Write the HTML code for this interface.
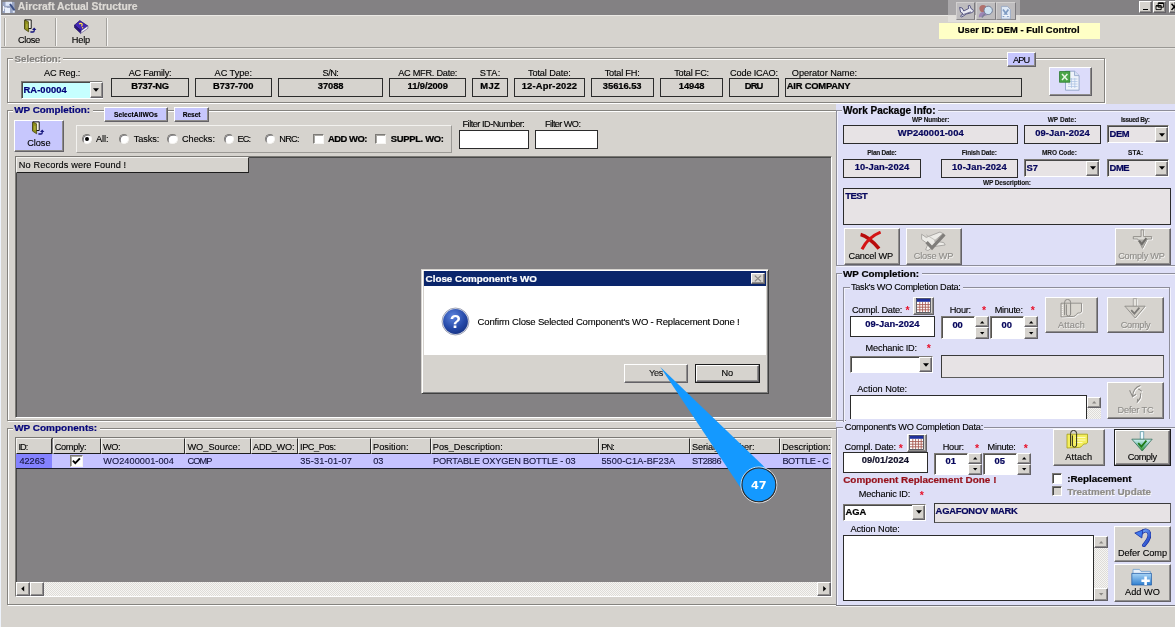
<!DOCTYPE html>
<html lang="en">
<head>
<meta charset="utf-8">
<title>Aircraft Actual Structure</title>
<style>
html,body{margin:0;padding:0;background:#fff;}
body{width:1176px;height:633px;overflow:hidden;font-family:"Liberation Sans",Arial,sans-serif;}
#app{position:relative;width:1176px;height:633px;overflow:hidden;background:#fff;will-change:transform;}
#app div,#app span.t,#app svg{position:absolute;box-sizing:border-box;}
span.t{white-space:pre;display:block;-webkit-text-stroke:0.12px;}
.grp{border:1px solid #85837f;box-shadow:1px 1px 0 #fff, inset 1px 1px 0 #fff;}
.fld{border:1px solid #2b2b2b;}
.btn{border:1px solid;border-color:#fff #646267 #646267 #fff;box-shadow:inset -1px -1px 0 #8f8d8c;}
.sunk{border:1px solid;border-color:#7b7975 #fff #fff #7b7975;box-shadow:inset 1px 1px 0 #484848;}
.hdr{border:1px solid;border-color:#f4f3f0 #2e2d2b #1c1c1c #f4f3f0;background:#d6d3ce;}
.pnl{border:1px solid;border-color:#f3f2ef #9b9995 #9b9995 #f3f2ef;}
.chk{border:1px solid;border-color:#7d7b77 #f6f5f3 #f6f5f3 #7d7b77;box-shadow:inset 1px 1px 0 #a9a7a3;}
.grl{border:1px solid #8d8d99;box-shadow:1px 1px 0 #f3f3fd, inset 1px 1px 0 #f3f3fd;}

</style>
</head>
<body>
<div id="app">
<div style="left:0px;top:0px;width:1176px;height:633px;background:#fff;"></div>
<div style="left:0px;top:0px;width:1px;height:627px;background:#eef3fc;"></div>
<div style="left:1px;top:0px;width:1174px;height:627px;background:#d6d3ce;"></div>
<div style="left:1px;top:0px;width:1174px;height:14.5px;background:#838183;"></div>
<div style="left:1px;top:14.5px;width:1174px;height:1.5px;background:#ebe9e5;"></div>
<svg style="left:2px;top:0.5px" width="14" height="13" viewBox="0 0 14 13"><rect x="0.5" y="1" width="12" height="11" fill="#9aa6c4"/><rect x="3.5" y="0.8" width="6.5" height="4" fill="#dfe8fa"/><rect x="3" y="7" width="5" height="5" fill="#e8effc"/><path d="M8 3L12.5 9.5" stroke="#3a4f86" stroke-width="2"/><rect x="10.8" y="9.6" width="2" height="2" fill="#e4ecfb"/><path d="M1.5 5v5M2 7h3" stroke="#f4f6fb" stroke-width="1"/></svg>
<span class="t" style="left:17.8px;top:1.53px;font-size:10.35px;line-height:10.35px;color:#dedbd6;letter-spacing:-0.000px;font-weight:700;-webkit-text-stroke:0.22px;">Aircraft Actual Structure</span>
<div style="left:947.7px;top:0px;width:72.7px;height:14.8px;background:#aaa8aa;"></div>
<div style="left:947.7px;top:14.8px;width:72.7px;height:7.4px;background:#e1dfdb;"></div>
<div style="left:956.4px;top:1.5px;width:19px;height:18.9px;background:#bebcbe;border:1px solid;border-color:#d2d0d0 #7c7a7e #8b898b #d2d0d0;"></div>
<div style="left:975.6px;top:1.5px;width:20px;height:18.9px;background:#bebcbe;border:1px solid;border-color:#d2d0d0 #7c7a7e #8b898b #d2d0d0;"></div>
<div style="left:995.8px;top:1.5px;width:20px;height:18.9px;background:#bebcbe;border:1px solid;border-color:#d2d0d0 #7c7a7e #8b898b #d2d0d0;"></div>
<svg style="left:956.4px;top:1.5px" width="60" height="19" viewBox="0 0 60 19"><path d="M3.6 5.4l2.6 0.6l1.6 3l5-2.6l-0.6-2.6l1.6-0.4l1.4 3.4l1.6 0.8c1 1 0.6 2.6-1 3l-5.4 1.4l-4.6 3l-1.4-0.8l2.6-2.6l-2.4-1.4z" fill="#e9eaf2" stroke="#4a4a78" stroke-width="0.9"/><path d="M5.4 13.2l9.6-3.4" stroke="#55557e" stroke-width="0.8"/><circle cx="27" cy="6.6" r="3.6" fill="#b0706c"/><path d="M22.8 15.6c0-4 2-5.6 4.4-5.6s3.4 1.2 3.8 3.2" fill="#9b86b6"/><circle cx="32.2" cy="8.4" r="4.2" fill="#cfe3f2" stroke="#74809a" stroke-width="1"/><path d="M28.8 12l-3 3.4" stroke="#7a7f95" stroke-width="1.5"/><path d="M45.4 4.4h6l3 3v9.6h-9z" fill="#dfe9f6" stroke="#93a4c4" stroke-width="0.8"/><path d="M47 7.4l5.4 7.4M52.4 7.4l-5.4 7.4" stroke="#7d9ac2" stroke-width="1.7"/><path d="M46.4 13.4h7.4" stroke="#f3f7fc" stroke-width="1.2"/></svg>
<div class="btn" style="left:1139.3px;top:1px;width:13px;height:11.6px;background:#d6d3ce;"></div>
<div class="btn" style="left:1152.8px;top:1px;width:13.2px;height:11.6px;background:#d6d3ce;"></div>
<div class="btn" style="left:1168.8px;top:1px;width:7.7px;height:11.6px;background:#d6d3ce;"></div>
<div style="left:1143.2px;top:8.6px;width:5.2px;height:1.8px;background:#000;"></div>
<svg style="left:1155px;top:2.3px" width="10" height="9" viewBox="0 0 10 9"><path d="M3.2 1h5.4v4.2H3.2z M1 3.6h5.2v4H1z" fill="#d6d3ce" stroke="#000" stroke-width="0.9"/><path d="M3.2 1.3h5.4M1 3.9h5.2" stroke="#000" stroke-width="1.4"/></svg>
<svg style="left:1170.5px;top:3px" width="6" height="8" viewBox="0 0 6 8"><path d="M0.5 0.8L6 7M6 0.8L0.5 7" stroke="#000" stroke-width="1.5"/></svg>
<div style="left:1175px;top:0px;width:1px;height:633px;background:#fff;"></div>
<div style="left:1px;top:47.2px;width:1174px;height:1.2px;background:#9a9894;"></div>
<div style="left:1px;top:48.4px;width:1174px;height:0.8px;background:#e6e4e0;"></div>
<div style="left:3.8px;top:17.5px;width:1px;height:28.5px;background:#a3a19d;"></div>
<div style="left:4.8px;top:17.5px;width:1px;height:28.5px;background:#f6f5f3;"></div>
<div style="left:55.3px;top:17.5px;width:1px;height:28.5px;background:#a3a19d;"></div>
<div style="left:56.3px;top:17.5px;width:1px;height:28.5px;background:#f6f5f3;"></div>
<div style="left:106.2px;top:17.5px;width:1px;height:28.5px;background:#a3a19d;"></div>
<div style="left:107.2px;top:17.5px;width:1px;height:28.5px;background:#f6f5f3;"></div>
<svg style="left:24px;top:19px" width="13" height="14.5" viewBox="0 0 13 14.5"><path d="M1 0.9h6.2v8.6h-6.2z" fill="#fffef4" stroke="#161616" stroke-width="1"/><path d="M0.7 0.9l3.9 1.9v10l-4.2-2.8z" fill="#8f8f1c" stroke="#3a3a08" stroke-width="0.7"/><path d="M2 4.4l1.6 0.8v4.6l-1.6-1z" fill="#a9a93a"/><path d="M6.4 13h2.6c0.9 0 1.2-0.4 1.2-1.2V10" fill="none" stroke="#15157c" stroke-width="1.3"/><path d="M8 10.9l2.2-2.5l2.2 2.5z" fill="#15157c"/></svg>
<span class="t" style="left:17.95px;top:35.8px;font-size:9.2px;line-height:9.2px;color:#000;letter-spacing:-0.305px;">Close</span>
<svg style="left:74px;top:19.5px" width="14.6" height="14" viewBox="0 0 14.6 14"><path d="M0.5 5.2L5.8 0.6L13.9 6L7.3 10.9Z" fill="#4326b8" stroke="#1f0f66" stroke-width="0.7"/><path d="M0.5 5.2V7.6L6.6 13.3L7.3 10.9Z" fill="#2a1480" stroke="#170a52" stroke-width="0.6"/><path d="M7.3 10.5L13.9 5.8V8.3L6.6 13.4Z" fill="#f6f5fb" stroke="#33246e" stroke-width="0.5"/><path d="M5.2 4.2c0.7-1 2.4-1 2.9-0.2c0.4 0.8-0.6 1.4-0.4 2.4" fill="none" stroke="#ffe23e" stroke-width="1.2"/><circle cx="8.6" cy="7.8" r="0.7" fill="#ffe23e"/></svg>
<span class="t" style="left:71.85px;top:35.8px;font-size:9.2px;line-height:9.2px;color:#000;letter-spacing:-0.207px;">Help</span>
<div style="left:939.3px;top:23px;width:160.5px;height:16px;background:#ffffc6;"></div>
<span class="t" style="left:957.8px;top:24.7px;font-size:9.4px;line-height:9.4px;color:#000;letter-spacing:0.053px;font-weight:700;-webkit-text-stroke:0.22px;">User ID: DEM - Full Control</span>
<div class="grp" style="left:7.2px;top:58.3px;width:1097.4px;height:44.3px;"></div>
<div style="left:12.8px;top:53px;width:50.2px;height:11px;background:#d6d3ce;"></div>
<span class="t" style="left:14.6px;top:53.53px;font-size:9.73px;line-height:9.73px;color:#817f7c;letter-spacing:0.000px;text-shadow:0.7px 0.7px 0 #fff;font-weight:700;-webkit-text-stroke:0.22px;">Selection:</span>
<span class="t" style="left:43.95px;top:68.9px;font-size:9.2px;line-height:9.2px;color:#000;letter-spacing:-0.118px;">AC Reg.:</span>
<div class="sunk" style="left:21.2px;top:81px;width:82.2px;height:17.6px;background:#c6ffff;"></div>
<div class="btn" style="left:89.5px;top:82.2px;width:13px;height:15.5px;background:#d6d3ce;"></div>
<svg style="left:92px;top:87.1px" width="8" height="6" viewBox="0 0 8 6"><path d="M1 1.35H7L4 4.65Z" fill="#000"/></svg>
<span class="t" style="left:23.5px;top:84.9px;font-size:9.4px;line-height:9.4px;color:#02027a;letter-spacing:0.065px;font-weight:700;-webkit-text-stroke:0.22px;">RA-00004</span>
<span class="t" style="left:128.65px;top:68.9px;font-size:9.2px;line-height:9.2px;color:#000;letter-spacing:-0.220px;">AC Family:</span>
<div class="fld" style="left:111.3px;top:78.1px;width:77.7px;height:18.9px;background:#d6d3ce;"></div>
<span class="t" style="left:131.15px;top:81.1px;font-size:9.4px;line-height:9.4px;color:#000;letter-spacing:-0.284px;font-weight:700;-webkit-text-stroke:0.22px;">B737-NG</span>
<span class="t" style="left:214.55px;top:68.9px;font-size:9.2px;line-height:9.2px;color:#000;letter-spacing:-0.025px;">AC Type:</span>
<div class="fld" style="left:194.6px;top:78.1px;width:77.4px;height:18.9px;background:#d6d3ce;"></div>
<span class="t" style="left:213.05px;top:81.1px;font-size:9.4px;line-height:9.4px;color:#000;letter-spacing:-0.112px;font-weight:700;-webkit-text-stroke:0.22px;">B737-700</span>
<span class="t" style="left:322.55px;top:68.9px;font-size:9.2px;line-height:9.2px;color:#000;letter-spacing:-0.531px;">S/N:</span>
<div class="fld" style="left:278.2px;top:78.1px;width:105px;height:18.9px;background:#d6d3ce;"></div>
<span class="t" style="left:317.8px;top:81.1px;font-size:9.4px;line-height:9.4px;color:#000;letter-spacing:-0.085px;font-weight:700;-webkit-text-stroke:0.22px;">37088</span>
<span class="t" style="left:398.15px;top:68.9px;font-size:9.2px;line-height:9.2px;color:#000;letter-spacing:-0.255px;">AC MFR. Date:</span>
<div class="fld" style="left:389.2px;top:78.1px;width:77.2px;height:18.9px;background:#d6d3ce;"></div>
<span class="t" style="left:407.55px;top:81.1px;font-size:9.4px;line-height:9.4px;color:#000;letter-spacing:-0.100px;font-weight:700;-webkit-text-stroke:0.22px;">11/9/2009</span>
<span class="t" style="left:479.8px;top:68.9px;font-size:9.2px;line-height:9.2px;color:#000;letter-spacing:0.245px;">STA:</span>
<div class="fld" style="left:472.4px;top:78.1px;width:35.3px;height:18.9px;background:#d6d3ce;"></div>
<span class="t" style="left:480.3px;top:81.1px;font-size:9.4px;line-height:9.4px;color:#000;letter-spacing:0.350px;font-weight:700;-webkit-text-stroke:0.22px;">MJZ</span>
<span class="t" style="left:527.9px;top:68.9px;font-size:9.2px;line-height:9.2px;color:#000;letter-spacing:-0.098px;">Total Date:</span>
<div class="fld" style="left:514.2px;top:78.1px;width:70.4px;height:18.9px;background:#d6d3ce;"></div>
<span class="t" style="left:521.65px;top:81.1px;font-size:9.4px;line-height:9.4px;color:#000;letter-spacing:0.168px;font-weight:700;-webkit-text-stroke:0.22px;">12-Apr-2022</span>
<span class="t" style="left:604.75px;top:68.9px;font-size:9.2px;line-height:9.2px;color:#000;letter-spacing:-0.226px;">Total FH:</span>
<div class="fld" style="left:590.7px;top:78.1px;width:63.1px;height:18.9px;background:#d6d3ce;"></div>
<span class="t" style="left:602.85px;top:81.1px;font-size:9.4px;line-height:9.4px;color:#000;letter-spacing:-0.058px;font-weight:700;-webkit-text-stroke:0.22px;">35616.53</span>
<span class="t" style="left:674.2px;top:68.9px;font-size:9.2px;line-height:9.2px;color:#000;letter-spacing:-0.226px;">Total FC:</span>
<div class="fld" style="left:660.1px;top:78.1px;width:63.2px;height:18.9px;background:#d6d3ce;"></div>
<span class="t" style="left:678.8px;top:81.1px;font-size:9.4px;line-height:9.4px;color:#000;letter-spacing:-0.085px;font-weight:700;-webkit-text-stroke:0.22px;">14948</span>
<span class="t" style="left:730.1px;top:68.9px;font-size:9.2px;line-height:9.2px;color:#000;letter-spacing:-0.178px;">Code ICAO:</span>
<div class="fld" style="left:729.4px;top:78.1px;width:49.4px;height:18.9px;background:#d6d3ce;"></div>
<span class="t" style="left:744.82px;top:81.1px;font-size:9.4px;line-height:9.4px;color:#000;letter-spacing:-0.900px;font-weight:700;-webkit-text-stroke:0.22px;">DRU</span>
<span class="t" style="left:791.8px;top:68.9px;font-size:9.2px;line-height:9.2px;color:#000;letter-spacing:-0.051px;">Operator Name:</span>
<div class="fld" style="left:785px;top:78.1px;width:237.2px;height:18.9px;background:#d6d3ce;"></div>
<span class="t" style="left:786.8px;top:81.1px;font-size:9.4px;line-height:9.4px;color:#000;letter-spacing:-0.215px;font-weight:700;-webkit-text-stroke:0.22px;">AIR COMPANY</span>
<div class="btn" style="left:1007.4px;top:52px;width:28.3px;height:15.3px;background:#c7c7fd;"></div>
<span class="t" style="left:1012.95px;top:55.7px;font-size:9.2px;line-height:9.2px;color:#000;letter-spacing:-0.859px;">APU</span>
<div class="btn" style="left:1049px;top:67px;width:42.7px;height:29.2px;background:#dcdcfa;"></div>
<svg style="left:1059px;top:70px" width="21" height="21" viewBox="0 0 21 21"><path d="M6.5 1.2h9l4.6 4.4v14.6H6.5z" fill="#eef3fb" stroke="#8ea3c8" stroke-width="0.9"/><path d="M15.5 1.2v4.4h4.6" fill="#d5e0f2" stroke="#8ea3c8" stroke-width="0.8"/><path d="M9 9h9.5M9 11.5h9.5M9 14h9.5M9 16.5h9.5M12.5 8v10M15.8 8v10" stroke="#a9c0e2" stroke-width="0.7"/><rect x="0.6" y="1.6" width="10.2" height="10.6" fill="#4aa548" stroke="#2a7a30" stroke-width="0.8"/><path d="M3 4l5.4 6M8.4 4L3 10" stroke="#e8f6e6" stroke-width="1.5"/></svg>
<div class="grp" style="left:7.2px;top:110.3px;width:830.8px;height:310.3px;"></div>
<div style="left:12.5px;top:104.5px;width:80px;height:12.5px;background:#d6d3ce;"></div>
<span class="t" style="left:14.2px;top:105.27px;font-size:9.87px;line-height:9.87px;color:#06067a;letter-spacing:0.000px;font-weight:700;-webkit-text-stroke:0.22px;">WP Completion:</span>
<div class="btn" style="left:104.2px;top:107px;width:63.4px;height:15.2px;background:#c7c7fd;"></div>
<span class="t" style="left:114px;top:111.95px;font-size:6.7px;line-height:6.7px;color:#000;letter-spacing:0.021px;font-weight:700;">SelectAllWOs</span>
<div class="btn" style="left:174px;top:107px;width:35.3px;height:15.2px;background:#c7c7fd;"></div>
<span class="t" style="left:182.75px;top:111.95px;font-size:6.7px;line-height:6.7px;color:#000;letter-spacing:-0.112px;font-weight:700;">Reset</span>
<div class="btn" style="left:14.2px;top:119.6px;width:49.4px;height:32px;background:#c7c7fd;"></div>
<span class="t" style="left:27.25px;top:138.7px;font-size:9.2px;line-height:9.2px;color:#000;letter-spacing:-0.055px;">Close</span>
<svg style="left:32.2px;top:121.4px" width="13" height="14.5" viewBox="0 0 13 14.5"><path d="M1 0.9h6.2v8.6h-6.2z" fill="#fffef4" stroke="#161616" stroke-width="1"/><path d="M0.7 0.9l3.9 1.9v10l-4.2-2.8z" fill="#8f8f1c" stroke="#3a3a08" stroke-width="0.7"/><path d="M2 4.4l1.6 0.8v4.6l-1.6-1z" fill="#a9a93a"/><path d="M6.4 13h2.6c0.9 0 1.2-0.4 1.2-1.2V10" fill="none" stroke="#15157c" stroke-width="1.3"/><path d="M8 10.9l2.2-2.5l2.2 2.5z" fill="#15157c"/></svg>
<div class="pnl" style="left:76.2px;top:125.4px;width:375.8px;height:27.6px;"></div>
<div style="left:81.5px;top:133.5px;width:10.6px;height:10.6px;border-radius:50%;background:#fff;border:1px solid;border-color:#7c7a76 #f4f3f0 #f4f3f0 #7c7a76;box-shadow:inset 0.8px 0.8px 0 #77757a;"></div>
<div style="left:85.3px;top:137.3px;width:3.8px;height:3.8px;background:#000;border-radius:50%;"></div>
<span class="t" style="left:96px;top:135.1px;font-size:9.2px;line-height:9.2px;color:#000;letter-spacing:-0.094px;">All:</span>
<div style="left:118.9px;top:133.5px;width:10.6px;height:10.6px;border-radius:50%;background:#fff;border:1px solid;border-color:#7c7a76 #f4f3f0 #f4f3f0 #7c7a76;box-shadow:inset 0.8px 0.8px 0 #77757a;"></div>
<span class="t" style="left:133.8px;top:135.1px;font-size:9.2px;line-height:9.2px;color:#000;letter-spacing:-0.115px;">Tasks:</span>
<div style="left:167.3px;top:133.5px;width:10.6px;height:10.6px;border-radius:50%;background:#fff;border:1px solid;border-color:#7c7a76 #f4f3f0 #f4f3f0 #7c7a76;box-shadow:inset 0.8px 0.8px 0 #77757a;"></div>
<span class="t" style="left:182px;top:135.1px;font-size:9.2px;line-height:9.2px;color:#000;letter-spacing:-0.039px;">Checks:</span>
<div style="left:223.5px;top:133.5px;width:10.6px;height:10.6px;border-radius:50%;background:#fff;border:1px solid;border-color:#7c7a76 #f4f3f0 #f4f3f0 #7c7a76;box-shadow:inset 0.8px 0.8px 0 #77757a;"></div>
<span class="t" style="left:237.5px;top:135.1px;font-size:9.2px;line-height:9.2px;color:#000;letter-spacing:-0.900px;">EC:</span>
<div style="left:264.9px;top:133.5px;width:10.6px;height:10.6px;border-radius:50%;background:#fff;border:1px solid;border-color:#7c7a76 #f4f3f0 #f4f3f0 #7c7a76;box-shadow:inset 0.8px 0.8px 0 #77757a;"></div>
<span class="t" style="left:279.3px;top:135.1px;font-size:9.2px;line-height:9.2px;color:#000;letter-spacing:-0.763px;">NRC:</span>
<div class="chk" style="left:313px;top:133.6px;width:10.5px;height:10.6px;background:#fff;"></div>
<span class="t" style="left:328px;top:134.3px;font-size:9.4px;line-height:9.4px;color:#000;letter-spacing:-0.465px;font-weight:700;-webkit-text-stroke:0.22px;">ADD WO:</span>
<div class="chk" style="left:375.4px;top:133.6px;width:10.5px;height:10.6px;background:#fff;"></div>
<span class="t" style="left:390.8px;top:134.3px;font-size:9.4px;line-height:9.4px;color:#000;letter-spacing:-0.286px;font-weight:700;-webkit-text-stroke:0.22px;">SUPPL. WO:</span>
<span class="t" style="left:462.5px;top:119.9px;font-size:9.2px;line-height:9.2px;color:#000;letter-spacing:-0.503px;">Filter ID-Number:</span>
<div class="fld" style="left:458.6px;top:130.4px;width:70.3px;height:18.5px;background:#fff;"></div>
<span class="t" style="left:545px;top:119.9px;font-size:9.2px;line-height:9.2px;color:#000;letter-spacing:-0.600px;">Filter WO:</span>
<div class="fld" style="left:535px;top:130.4px;width:63.3px;height:18.5px;background:#fff;"></div>
<div class="sunk" style="left:15.2px;top:156.4px;width:817.2px;height:261.4px;background:#848284;"></div>
<div class="hdr" style="left:16.2px;top:157.4px;width:232.4px;height:15.2px;"></div>
<span class="t" style="left:18.8px;top:160.7px;font-size:9.2px;line-height:9.2px;color:#000;letter-spacing:0.122px;">No Records were Found !</span>
<div class="grp" style="left:7.2px;top:427.8px;width:830.8px;height:177.6px;"></div>
<div style="left:12.5px;top:422px;width:87px;height:12px;background:#d6d3ce;"></div>
<span class="t" style="left:14.2px;top:422.81px;font-size:9.98px;line-height:9.98px;color:#06067a;letter-spacing:0.000px;font-weight:700;-webkit-text-stroke:0.22px;">WP Components:</span>
<div class="sunk" style="left:15.2px;top:437.2px;width:817.2px;height:159.8px;background:#848284;"></div>
<div style="left:16.2px;top:453.6px;width:814.6px;height:15.4px;background:#c6c3ff;border-bottom:1px solid #1c1c2a;"></div>
<div style="left:16.2px;top:453.6px;width:36.3px;height:14.4px;background:#8482ff;"></div>
<div style="left:0;top:0;width:830.6px;height:633px;overflow:hidden">
<div class="hdr" style="left:16.2px;top:438.2px;width:36.3px;height:15.6px;"></div>
<div class="hdr" style="left:52.5px;top:438.2px;width:48.3px;height:15.6px;"></div>
<div class="hdr" style="left:100.8px;top:438.2px;width:84.4px;height:15.6px;"></div>
<div class="hdr" style="left:185.2px;top:438.2px;width:65.6px;height:15.6px;"></div>
<div class="hdr" style="left:250.8px;top:438.2px;width:47px;height:15.6px;"></div>
<div class="hdr" style="left:297.8px;top:438.2px;width:73px;height:15.6px;"></div>
<div class="hdr" style="left:370.8px;top:438.2px;width:59.8px;height:15.6px;"></div>
<div class="hdr" style="left:430.6px;top:438.2px;width:168.4px;height:15.6px;"></div>
<div class="hdr" style="left:599px;top:438.2px;width:90.7px;height:15.6px;"></div>
<div class="hdr" style="left:689.7px;top:438.2px;width:90.3px;height:15.6px;"></div>
<div class="hdr" style="left:780px;top:438.2px;width:80px;height:15.6px;"></div>
<span class="t" style="left:18.4px;top:442.7px;font-size:9.2px;line-height:9.2px;color:#000;letter-spacing:-0.900px;">ID:</span>
<span class="t" style="left:19.4px;top:457.3px;font-size:9.2px;line-height:9.2px;color:#15153c;letter-spacing:-0.021px;">42263</span>
<span class="t" style="left:54.7px;top:442.7px;font-size:9.2px;line-height:9.2px;color:#000;letter-spacing:-0.290px;">Comply:</span>
<span class="t" style="left:103px;top:442.7px;font-size:9.2px;line-height:9.2px;color:#000;letter-spacing:-0.448px;">WO:</span>
<span class="t" style="left:103.2px;top:457.3px;font-size:9.2px;line-height:9.2px;color:#15153c;letter-spacing:0.061px;">WO2400001-004</span>
<span class="t" style="left:187.4px;top:442.7px;font-size:9.2px;line-height:9.2px;color:#000;letter-spacing:0.037px;">WO_Source:</span>
<span class="t" style="left:187.6px;top:457.3px;font-size:9.2px;line-height:9.2px;color:#15153c;letter-spacing:-0.900px;">COMP</span>
<span class="t" style="left:253px;top:442.7px;font-size:9.2px;line-height:9.2px;color:#000;letter-spacing:-0.223px;">ADD_WO:</span>
<span class="t" style="left:300px;top:442.7px;font-size:9.2px;line-height:9.2px;color:#000;letter-spacing:-0.409px;">IPC_Pos:</span>
<span class="t" style="left:300.2px;top:457.3px;font-size:9.2px;line-height:9.2px;color:#15153c;letter-spacing:0.168px;">35-31-01-07</span>
<span class="t" style="left:373px;top:442.7px;font-size:9.2px;line-height:9.2px;color:#000;letter-spacing:0.027px;">Position:</span>
<span class="t" style="left:373.2px;top:457.3px;font-size:9.2px;line-height:9.2px;color:#15153c;">03</span>
<span class="t" style="left:432.8px;top:442.7px;font-size:9.2px;line-height:9.2px;color:#000;letter-spacing:0.030px;">Pos_Description:</span>
<span class="t" style="left:433px;top:457.3px;font-size:9.2px;line-height:9.2px;color:#15153c;letter-spacing:-0.158px;">PORTABLE OXYGEN BOTTLE - 03</span>
<span class="t" style="left:601.2px;top:442.7px;font-size:9.2px;line-height:9.2px;color:#000;letter-spacing:-0.900px;">PN:</span>
<span class="t" style="left:601.4px;top:457.3px;font-size:9.2px;line-height:9.2px;color:#15153c;letter-spacing:0.091px;">5500-C1A-BF23A</span>
<span class="t" style="left:691.9px;top:442.7px;font-size:9.2px;line-height:9.2px;color:#000;letter-spacing:-0.086px;">Serial_Number:</span>
<span class="t" style="left:692.1px;top:457.3px;font-size:9.2px;line-height:9.2px;color:#15153c;letter-spacing:-0.545px;">ST2886</span>
<span class="t" style="left:782.2px;top:442.7px;font-size:9.2px;line-height:9.2px;color:#000;letter-spacing:-0.007px;">Description:</span>
<span class="t" style="left:782.4px;top:457.3px;font-size:9.2px;line-height:9.2px;color:#15153c;letter-spacing:-0.456px;">BOTTLE - C</span>
</div>
<div class="chk" style="left:70.2px;top:455.4px;width:12.6px;height:12px;background:#fff;"></div>
<svg style="left:70.2px;top:455.4px" width="12.6" height="12" viewBox="0 0 12 12"><path d="M2.6 5.6L5 8.2L9.6 3.4" fill="none" stroke="#000" stroke-width="1.9"/></svg>
<div style="left:16.2px;top:582.2px;width:814.6px;height:13.6px;background:#e9e7e3;background-image:repeating-conic-gradient(#f6f5f3 0 25%,#dedcd8 0 50%);background-size:2px 2px;"></div>
<div class="btn" style="left:16.2px;top:582.2px;width:13.8px;height:13.6px;background:#d6d3ce;"></div>
<div class="btn" style="left:30px;top:582.2px;width:14px;height:13.6px;background:#d6d3ce;"></div>
<div class="btn" style="left:817px;top:582.2px;width:13.8px;height:13.6px;background:#d6d3ce;"></div>
<svg style="left:19.9px;top:585.3px" width="5.4" height="7.4" viewBox="0 0 5.4 7.4"><path d="M4.19 1V6.4L1.22 3.7Z" fill="#000"/></svg>
<svg style="left:821.5px;top:585.3px" width="5.4" height="7.4" viewBox="0 0 5.4 7.4"><path d="M1.22 1V6.4L4.19 3.7Z" fill="#000"/></svg>
<div style="left:835.6px;top:104px;width:339.4px;height:502px;background:#dedff7;"></div>
<div class="grl" style="left:836.2px;top:110.3px;width:343.8px;height:155.9px;"></div>
<div style="left:841.5px;top:104.5px;width:96px;height:12.5px;background:#dedff7;"></div>
<span class="t" style="left:843px;top:105.61px;font-size:9.99px;line-height:9.99px;color:#000;letter-spacing:0.000px;font-weight:700;-webkit-text-stroke:0.22px;">Work Package Info:</span>
<span class="t" style="left:912.1px;top:117.05px;font-size:6.5px;line-height:6.5px;color:#161616;letter-spacing:-0.187px;font-weight:700;">WP Number:</span>
<div class="fld" style="left:843.4px;top:125.2px;width:174.8px;height:18.5px;background:#e7e3e5;"></div>
<span class="t" style="left:897.8px;top:128.2px;font-size:9.4px;line-height:9.4px;color:#06065c;letter-spacing:0.062px;font-weight:700;-webkit-text-stroke:0.22px;">WP240001-004</span>
<span class="t" style="left:1047.65px;top:117.05px;font-size:6.5px;line-height:6.5px;color:#161616;letter-spacing:0.041px;font-weight:700;">WP Date:</span>
<div class="fld" style="left:1024.2px;top:125.2px;width:76.8px;height:18.5px;background:#e7e3e5;"></div>
<span class="t" style="left:1035.25px;top:128.2px;font-size:9.4px;line-height:9.4px;color:#06065c;letter-spacing:0.087px;font-weight:700;-webkit-text-stroke:0.22px;">09-Jan-2024</span>
<span class="t" style="left:1120.9px;top:117.05px;font-size:6.5px;line-height:6.5px;color:#161616;letter-spacing:-0.430px;font-weight:700;">Issued By:</span>
<div class="sunk" style="left:1107.3px;top:125.3px;width:61.9px;height:17.8px;background:#e7e3e5;"></div>
<div class="btn" style="left:1155.3px;top:126.5px;width:13px;height:15.7px;background:#d6d3ce;"></div>
<svg style="left:1157.8px;top:131.5px" width="8" height="6" viewBox="0 0 8 6"><path d="M1 1.35H7L4 4.65Z" fill="#000"/></svg>
<span class="t" style="left:1109.6px;top:129.3px;font-size:9.4px;line-height:9.4px;color:#06065c;letter-spacing:-0.444px;font-weight:700;-webkit-text-stroke:0.22px;">DEM</span>
<span class="t" style="left:867.25px;top:149.55px;font-size:6.5px;line-height:6.5px;color:#161616;letter-spacing:-0.254px;font-weight:700;">Plan Date:</span>
<div class="fld" style="left:843.4px;top:159px;width:77.3px;height:18.5px;background:#e7e3e5;"></div>
<span class="t" style="left:854.7px;top:162px;font-size:9.4px;line-height:9.4px;color:#06065c;letter-spacing:0.087px;font-weight:700;-webkit-text-stroke:0.22px;">10-Jan-2024</span>
<span class="t" style="left:961.8px;top:149.55px;font-size:6.5px;line-height:6.5px;color:#161616;letter-spacing:-0.200px;font-weight:700;">Finish Date:</span>
<div class="fld" style="left:940.6px;top:159px;width:77.6px;height:18.5px;background:#e7e3e5;"></div>
<span class="t" style="left:952.05px;top:162px;font-size:9.4px;line-height:9.4px;color:#06065c;letter-spacing:0.087px;font-weight:700;-webkit-text-stroke:0.22px;">10-Jan-2024</span>
<span class="t" style="left:1042px;top:149.55px;font-size:6.5px;line-height:6.5px;color:#161616;letter-spacing:-0.073px;font-weight:700;">MRO Code:</span>
<div class="sunk" style="left:1024.2px;top:159.4px;width:75.8px;height:17.2px;background:#e7e3e5;"></div>
<div class="btn" style="left:1086.1px;top:160.6px;width:13px;height:15.1px;background:#d6d3ce;"></div>
<svg style="left:1088.6px;top:165.3px" width="8" height="6" viewBox="0 0 8 6"><path d="M1 1.35H7L4 4.65Z" fill="#000"/></svg>
<span class="t" style="left:1026.5px;top:163.1px;font-size:9.4px;line-height:9.4px;color:#06065c;font-weight:700;-webkit-text-stroke:0.22px;">S7</span>
<span class="t" style="left:1128px;top:149.55px;font-size:6.5px;line-height:6.5px;color:#161616;letter-spacing:0.172px;font-weight:700;">STA:</span>
<div class="sunk" style="left:1107.3px;top:159.4px;width:61.9px;height:17.2px;background:#e7e3e5;"></div>
<div class="btn" style="left:1155.3px;top:160.6px;width:13px;height:15.1px;background:#d6d3ce;"></div>
<svg style="left:1157.8px;top:165.3px" width="8" height="6" viewBox="0 0 8 6"><path d="M1 1.35H7L4 4.65Z" fill="#000"/></svg>
<span class="t" style="left:1109.6px;top:163.1px;font-size:9.4px;line-height:9.4px;color:#06065c;letter-spacing:-0.444px;font-weight:700;-webkit-text-stroke:0.22px;">DME</span>
<span class="t" style="left:983px;top:180.25px;font-size:6.5px;line-height:6.5px;color:#161616;letter-spacing:-0.149px;font-weight:700;">WP Description:</span>
<div class="fld" style="left:843.4px;top:188px;width:327.4px;height:36.6px;background:#e7e3e5;"></div>
<span class="t" style="left:845.3px;top:190.5px;font-size:9.4px;line-height:9.4px;color:#06065c;letter-spacing:-0.508px;font-weight:700;-webkit-text-stroke:0.22px;">TEST</span>
<div class="btn" style="left:843.8px;top:227.6px;width:55.8px;height:37.2px;background:#d6d3ce;"></div>
<span class="t" style="left:848.45px;top:251.7px;font-size:9.2px;line-height:9.2px;color:#000;letter-spacing:-0.164px;">Cancel WP</span>
<svg style="left:859.2px;top:230.8px" width="23" height="19.4" viewBox="0 0 23 19.4"><path d="M1.6 3.4C7 4.6 13.6 10 20 17.6" fill="none" stroke="#b80c0c" stroke-width="3.6"/><path d="M21.6 1.2C14.4 4 7 10.4 3 18.2" fill="none" stroke="#d41414" stroke-width="3"/></svg>
<div class="btn" style="left:906.4px;top:227.6px;width:55.6px;height:37.2px;background:#d6d3ce;"></div>
<span class="t" style="left:913.85px;top:251.7px;font-size:9.2px;line-height:9.2px;color:#8e8c88;letter-spacing:-0.200px;text-shadow:0.7px 0.7px 0 rgba(255,255,255,0.75);">Close WP</span>
<svg style="left:918.6px;top:228.6px" width="30" height="24" viewBox="0 0 30 24"><path d="M2.6 5.2l4.6 3.2L21 3l3 1.6l-8.6 7.4l9.4 1.6l1.4 2.4l-11.6 1.6l-5.6 4l-2.4-1l2.4-5.6l-6.4-4.6z" fill="#ecebe7" stroke="#a5a39f" stroke-width="0.9"/><path d="M7 5.6l13 8" stroke="#b9b7b3" stroke-width="0.8"/><path d="M7.6 13.2l5.4 5.6L25.4 5.4" fill="none" stroke="#807e7b" stroke-width="3.2"/></svg>
<div class="btn" style="left:1114.8px;top:227.6px;width:56px;height:37.3px;background:#d6d3ce;"></div>
<span class="t" style="left:1118.2px;top:251.7px;font-size:9.2px;line-height:9.2px;color:#8e8c88;letter-spacing:-0.220px;text-shadow:0.7px 0.7px 0 rgba(255,255,255,0.75);">Comply WP</span>
<svg style="left:1131.4px;top:229px" width="23" height="21" viewBox="0 0 23 21"><path d="M10.9 1.6h2.6v6.8h8v2.4h-4.4l-4.8 9.4l-4.8-9.4H3.1V8.4h7.8z" fill="none" stroke="#fff" stroke-width="0.9"/><path d="M10.1 0.8h2.6v6.8h8v2.4h-4.4l-4.8 9.4l-4.8-9.4H2.3V7.6h7.8z" fill="#dedcd7" stroke="#8b8985" stroke-width="0.9"/><path d="M6.4 10.4h10l-5 8z" fill="#aeaca8"/><path d="M8 11.6l2.8 3.6l4.6-6" fill="none" stroke="#6f6d6a" stroke-width="2"/></svg>
<div class="grl" style="left:836.2px;top:273.3px;width:343.8px;height:147.5px;"></div>
<div style="left:841.5px;top:267.5px;width:80px;height:12.5px;background:#dedff7;"></div>
<span class="t" style="left:843px;top:268.67px;font-size:9.87px;line-height:9.87px;color:#000;letter-spacing:0.000px;font-weight:700;-webkit-text-stroke:0.22px;">WP Completion:</span>
<div class="grl" style="left:843.3px;top:287.2px;width:326.7px;height:144.8px;"></div>
<div style="left:849.5px;top:281.5px;width:113.5px;height:11.5px;background:#dedff7;"></div>
<span class="t" style="left:851px;top:282.8px;font-size:9.2px;line-height:9.2px;color:#000;letter-spacing:-0.292px;">Task's WO Completion Data:</span>
<span class="t" style="left:851.9px;top:305.7px;font-size:9.2px;line-height:9.2px;color:#000;letter-spacing:-0.290px;">Compl. Date:</span>
<span class="t" style="left:905.56px;top:305.15px;font-size:10.5px;line-height:10.5px;color:#e8102a;-webkit-text-stroke:0;font-weight:700;">*</span>
<div class="btn" style="left:913.2px;top:297px;width:21px;height:17.5px;background:#d6d3ce;"></div>
<svg style="left:915.8px;top:297.8px" width="15" height="14.8" viewBox="0 0 15 14.8"><rect x="0.4" y="0.4" width="14.2" height="14" fill="#fff" stroke="#3c3c46" stroke-width="0.8"/><rect x="0.8" y="0.8" width="13.4" height="3" fill="#1f2f9c"/><path d="M1 6.6h13M1 9.2h13M1 11.8h13M3.8 4v10M6.6 4v10M9.4 4v10M12.2 4v10" stroke="#a85a52" stroke-width="0.9"/></svg>
<div class="fld" style="left:850.2px;top:316.1px;width:84.4px;height:21.4px;background:#fff;"></div>
<span class="t" style="left:865.2px;top:319.4px;font-size:9.4px;line-height:9.4px;color:#06065c;letter-spacing:0.057px;font-weight:700;-webkit-text-stroke:0.22px;">09-Jan-2024</span>
<span class="t" style="left:949.8px;top:305.7px;font-size:9.2px;line-height:9.2px;color:#000;letter-spacing:-0.324px;">Hour:</span>
<span class="t" style="left:981.96px;top:305.15px;font-size:10.5px;line-height:10.5px;color:#e8102a;-webkit-text-stroke:0;font-weight:700;">*</span>
<div class="sunk" style="left:940.7px;top:316.2px;width:34.3px;height:22.4px;background:#fff;border-color:#7d7b77 #fff #fff #7d7b77;box-shadow:inset 1px 1px 0 #55534f;"></div>
<span class="t" style="left:952.42px;top:319.9px;font-size:9.4px;line-height:9.4px;color:#06065c;font-weight:700;-webkit-text-stroke:0.22px;">00</span>
<div class="btn" style="left:975px;top:316.2px;width:13.8px;height:11.2px;background:#d6d3ce;"></div>
<div class="btn" style="left:975px;top:327.4px;width:13.8px;height:11.2px;background:#d6d3ce;"></div>
<svg style="left:978.7px;top:319.6px" width="6.4" height="4.4" viewBox="0 0 6.4 4.4"><path d="M1 3.41H5.4L3.2 0.99Z" fill="#000"/></svg>
<svg style="left:978.7px;top:330.8px" width="6.4" height="4.4" viewBox="0 0 6.4 4.4"><path d="M1 0.99H5.4L3.2 3.41Z" fill="#000"/></svg>
<span class="t" style="left:994.8px;top:305.7px;font-size:9.2px;line-height:9.2px;color:#000;letter-spacing:-0.328px;">Minute:</span>
<span class="t" style="left:1030.76px;top:305.15px;font-size:10.5px;line-height:10.5px;color:#e8102a;-webkit-text-stroke:0;font-weight:700;">*</span>
<div class="sunk" style="left:989.9px;top:316.2px;width:34.2px;height:22.4px;background:#fff;border-color:#7d7b77 #fff #fff #7d7b77;box-shadow:inset 1px 1px 0 #55534f;"></div>
<span class="t" style="left:1001.57px;top:319.9px;font-size:9.4px;line-height:9.4px;color:#06065c;font-weight:700;-webkit-text-stroke:0.22px;">00</span>
<div class="btn" style="left:1024.1px;top:316.2px;width:13.8px;height:11.2px;background:#d6d3ce;"></div>
<div class="btn" style="left:1024.1px;top:327.4px;width:13.8px;height:11.2px;background:#d6d3ce;"></div>
<svg style="left:1027.8px;top:319.6px" width="6.4" height="4.4" viewBox="0 0 6.4 4.4"><path d="M1 3.41H5.4L3.2 0.99Z" fill="#000"/></svg>
<svg style="left:1027.8px;top:330.8px" width="6.4" height="4.4" viewBox="0 0 6.4 4.4"><path d="M1 0.99H5.4L3.2 3.41Z" fill="#000"/></svg>
<div class="btn" style="left:1045px;top:297.2px;width:52.8px;height:36.2px;background:#d6d3ce;"></div>
<span class="t" style="left:1057.9px;top:321.1px;font-size:9.2px;line-height:9.2px;color:#8e8c88;letter-spacing:0.184px;text-shadow:0.7px 0.7px 0 rgba(255,255,255,0.75);">Attach</span>
<svg style="left:1059.6px;top:298.6px" width="23" height="20" viewBox="0 0 23 20"><path d="M1.8 5H22.3V12.8c0 1.6-1.6 2-3.2 2c-1.8 0-2 3-4.6 3.4L1.8 18.8Z" fill="none" stroke="#fff" stroke-width="0.9"/><path d="M1 4.2H21.5V12c0 1.6-1.6 2-3.2 2c-1.8 0-2 3-4.6 3.4L1 18Z" fill="#d9d6cf" stroke="#8b8985" stroke-width="0.9"/><path d="M4.6 16.2V3.4a3 3 0 0 1 6 0V15a2.1 2.1 0 0 1-4.2 0V5.4" fill="none" stroke="#8b8985" stroke-width="1"/><path d="M2.4 6v11" stroke="#fff" stroke-width="0.8" stroke-dasharray="1 1"/></svg>
<div class="btn" style="left:1107.4px;top:297.2px;width:56.5px;height:36.2px;background:#d6d3ce;"></div>
<span class="t" style="left:1120.75px;top:321.1px;font-size:9.2px;line-height:9.2px;color:#8e8c88;letter-spacing:-0.277px;text-shadow:0.7px 0.7px 0 rgba(255,255,255,0.75);">Comply</span>
<svg style="left:1124.2px;top:298px" width="23" height="21.5" viewBox="0 0 23 21.5"><path d="M10.1 1.4h3.4v8h-3.4z M1.6 9H22L12 20.8Z" fill="none" stroke="#fff" stroke-width="0.9"/><path d="M9.3 0.6h3.4v8h-3.4z" fill="#e6e4df" stroke="#9a9894" stroke-width="0.8"/><path d="M0.8 8.2H21.2L11.2 20Z" fill="#d2cfc8" stroke="#8b8985" stroke-width="0.9"/><path d="M7.2 12.2l3.2 3.4l5-6" fill="none" stroke="#7d7b78" stroke-width="1.7"/></svg>
<span class="t" style="left:865.6px;top:344px;font-size:9.2px;line-height:9.2px;color:#000;letter-spacing:-0.190px;">Mechanic ID:</span>
<span class="t" style="left:926.66px;top:343.45px;font-size:10.5px;line-height:10.5px;color:#e8102a;-webkit-text-stroke:0;font-weight:700;">*</span>
<div class="sunk" style="left:850.4px;top:355.8px;width:82.9px;height:17.4px;background:#fff;"></div>
<div class="btn" style="left:919.4px;top:357px;width:13px;height:15.3px;background:#d6d3ce;"></div>
<svg style="left:921.9px;top:361.8px" width="8" height="6" viewBox="0 0 8 6"><path d="M1 1.35H7L4 4.65Z" fill="#000"/></svg>
<div class="sunk" style="left:940.6px;top:355px;width:223.4px;height:23.4px;background:#e7e3e5;border-width:1.5px;border-color:#3a3a3a #5c5c5c #5c5c5c #3a3a3a;box-shadow:none;"></div>
<span class="t" style="left:857.2px;top:385.2px;font-size:9.2px;line-height:9.2px;color:#000;letter-spacing:-0.011px;">Action Note:</span>
<div class="fld" style="left:850.4px;top:395.4px;width:237px;height:49.6px;background:#fff;"></div>
<div style="left:1087.4px;top:396.6px;width:13.6px;height:48.4px;background:#e9e7e3;background-image:repeating-conic-gradient(#f6f5f3 0 25%,#dedcd8 0 50%);background-size:2px 2px;"></div>
<div class="btn" style="left:1087.4px;top:396.6px;width:13.6px;height:11.5px;background:#d6d3ce;"></div>
<div class="btn" style="left:1087.4px;top:433.5px;width:13.6px;height:11.5px;background:#d6d3ce;"></div>
<svg style="left:1091px;top:400.15px" width="6.4" height="4.4" viewBox="0 0 6.4 4.4"><path d="M1 3.41H5.4L3.2 0.99Z" fill="#8a8884"/></svg>
<svg style="left:1091px;top:437.05px" width="6.4" height="4.4" viewBox="0 0 6.4 4.4"><path d="M1 0.99H5.4L3.2 3.41Z" fill="#8a8884"/></svg>
<div class="btn" style="left:1107.3px;top:382.3px;width:56.5px;height:36.5px;background:#d6d3ce;"></div>
<span class="t" style="left:1117.4px;top:405.5px;font-size:9.2px;line-height:9.2px;color:#8e8c88;letter-spacing:-0.122px;text-shadow:0.7px 0.7px 0 rgba(255,255,255,0.75);">Defer TC</span>
<svg style="left:1127.6px;top:384px" width="16" height="20" viewBox="0 0 16 20"><path d="M1.6 6.2l3 6.4l3.4-2.4M4.6 12.4C5 7 8 3 12.4 1.6M10.4 5l3.6 2.4M12.4 9.4c1 3-0.6 6-3 8.4l0.4-3" fill="none" stroke="#fff" stroke-width="1.1" transform="translate(0.8 0.8)"/><path d="M1.6 6.2l3 6.4l3.4-2.4M4.6 12.4C5 7 8 3 12.4 1.6M10.4 5l3.6 2.4M12.4 9.4c1 3-0.6 6-3 8.4l0.4-3" fill="none" stroke="#8b8985" stroke-width="1.1"/></svg>
<div style="left:836px;top:421.6px;width:339px;height:184.4px;background:#dedff7;"></div>
<div style="left:845.5px;top:419px;width:329.5px;height:4px;background:#dedff7;"></div>
<div class="grl" style="left:836.2px;top:426.6px;width:343.8px;height:185.4px;"></div>
<div style="left:842.8px;top:421.6px;width:141.2px;height:10.9px;background:#dedff7;"></div>
<span class="t" style="left:844.8px;top:423px;font-size:9.2px;line-height:9.2px;color:#000;letter-spacing:-0.245px;">Component's WO Completion Data:</span>
<span class="t" style="left:844.6px;top:443.1px;font-size:9.2px;line-height:9.2px;color:#000;letter-spacing:-0.199px;">Compl. Date:</span>
<span class="t" style="left:898.86px;top:443.35px;font-size:10.5px;line-height:10.5px;color:#e8102a;-webkit-text-stroke:0;font-weight:700;">*</span>
<div class="btn" style="left:907px;top:434.2px;width:20.4px;height:17.4px;background:#d6d3ce;"></div>
<svg style="left:909.4px;top:435px" width="15" height="14.8" viewBox="0 0 15 14.8"><rect x="0.4" y="0.4" width="14.2" height="14" fill="#fff" stroke="#3c3c46" stroke-width="0.8"/><rect x="0.8" y="0.8" width="13.4" height="3" fill="#1f2f9c"/><path d="M1 6.6h13M1 9.2h13M1 11.8h13M3.8 4v10M6.6 4v10M9.4 4v10M12.2 4v10" stroke="#a85a52" stroke-width="0.9"/></svg>
<div class="fld" style="left:843.2px;top:452px;width:84.4px;height:20.8px;background:#fff;"></div>
<span class="t" style="left:861.65px;top:454.7px;font-size:9.4px;line-height:9.4px;color:#10102a;letter-spacing:0.050px;font-weight:700;-webkit-text-stroke:0.22px;">09/01/2024</span>
<span class="t" style="left:942.7px;top:443.1px;font-size:9.2px;line-height:9.2px;color:#000;letter-spacing:-0.249px;">Hour:</span>
<span class="t" style="left:975.06px;top:443.35px;font-size:10.5px;line-height:10.5px;color:#e8102a;-webkit-text-stroke:0;font-weight:700;">*</span>
<div class="sunk" style="left:934px;top:452.6px;width:34px;height:22.4px;background:#fff;border-color:#7d7b77 #fff #fff #7d7b77;box-shadow:inset 1px 1px 0 #55534f;"></div>
<span class="t" style="left:945.57px;top:455.9px;font-size:9.4px;line-height:9.4px;color:#06065c;font-weight:700;-webkit-text-stroke:0.22px;">01</span>
<div class="btn" style="left:968px;top:452.6px;width:13.8px;height:11.2px;background:#d6d3ce;"></div>
<div class="btn" style="left:968px;top:463.8px;width:13.8px;height:11.2px;background:#d6d3ce;"></div>
<svg style="left:971.7px;top:456px" width="6.4" height="4.4" viewBox="0 0 6.4 4.4"><path d="M1 3.41H5.4L3.2 0.99Z" fill="#000"/></svg>
<svg style="left:971.7px;top:467.2px" width="6.4" height="4.4" viewBox="0 0 6.4 4.4"><path d="M1 0.99H5.4L3.2 3.41Z" fill="#000"/></svg>
<span class="t" style="left:987.6px;top:443.1px;font-size:9.2px;line-height:9.2px;color:#000;letter-spacing:-0.312px;">Minute:</span>
<span class="t" style="left:1023.86px;top:443.35px;font-size:10.5px;line-height:10.5px;color:#e8102a;-webkit-text-stroke:0;font-weight:700;">*</span>
<div class="sunk" style="left:983px;top:452.6px;width:33.9px;height:22.4px;background:#fff;border-color:#7d7b77 #fff #fff #7d7b77;box-shadow:inset 1px 1px 0 #55534f;"></div>
<span class="t" style="left:994.52px;top:455.9px;font-size:9.4px;line-height:9.4px;color:#06065c;font-weight:700;-webkit-text-stroke:0.22px;">05</span>
<div class="btn" style="left:1016.9px;top:452.6px;width:13.8px;height:11.2px;background:#d6d3ce;"></div>
<div class="btn" style="left:1016.9px;top:463.8px;width:13.8px;height:11.2px;background:#d6d3ce;"></div>
<svg style="left:1020.6px;top:456px" width="6.4" height="4.4" viewBox="0 0 6.4 4.4"><path d="M1 3.41H5.4L3.2 0.99Z" fill="#000"/></svg>
<svg style="left:1020.6px;top:467.2px" width="6.4" height="4.4" viewBox="0 0 6.4 4.4"><path d="M1 0.99H5.4L3.2 3.41Z" fill="#000"/></svg>
<div class="btn" style="left:1052.9px;top:429.3px;width:51.7px;height:36.6px;background:#d6d3ce;"></div>
<span class="t" style="left:1065.3px;top:452.9px;font-size:9.2px;line-height:9.2px;color:#000;letter-spacing:0.164px;">Attach</span>
<svg style="left:1066.4px;top:430.2px" width="23" height="20" viewBox="0 0 23 20"><path d="M1 4.2H21.5V12c0 1.6-1.6 2-3.2 2c-1.8 0-2 3-4.6 3.4L1 18Z" fill="#f3ee5e" stroke="#a59d12" stroke-width="0.8"/><path d="M9.5 7.5h10M9.5 10h10M9.5 12.5h7" stroke="#fffcc0" stroke-width="1"/><path d="M4.6 16.2V3.4a3 3 0 0 1 6 0V15a2.1 2.1 0 0 1-4.2 0V5.4" fill="none" stroke="#2c2c1c" stroke-width="1"/></svg>
<div style="left:1114px;top:429.3px;width:56.9px;height:36.6px;background:#1d1d1d;"></div>
<div class="btn" style="left:1115px;top:430.3px;width:54.9px;height:34.6px;background:#d6d3ce;"></div>
<span class="t" style="left:1127.8px;top:452.9px;font-size:9.2px;line-height:9.2px;color:#000;letter-spacing:-0.377px;">Comply</span>
<svg style="left:1131px;top:430.6px" width="23" height="21.5" viewBox="0 0 23 21.5"><defs><linearGradient id="cg" x1="0" y1="0" x2="0" y2="1"><stop offset="0" stop-color="#d9f3f7"/><stop offset="0.45" stop-color="#7fc4b4"/><stop offset="1" stop-color="#2d961f"/></linearGradient></defs><path d="M9.3 0.6h3.4v8h-3.4z" fill="#eefaff" stroke="#5d9aa8" stroke-width="0.8"/><path d="M0.8 8.2H21.2L11.2 20Z" fill="url(#cg)" stroke="#2f6d58" stroke-width="0.8"/><path d="M7.2 12.2l3.2 3.4l5-6" fill="none" stroke="#1f7a16" stroke-width="1.7"/></svg>
<span class="t" style="left:843.2px;top:475.23px;font-size:9.93px;line-height:9.93px;color:#96101a;letter-spacing:0.000px;font-weight:700;-webkit-text-stroke:0.22px;">Component Replacement Done !</span>
<div class="sunk" style="left:1051.8px;top:473.2px;width:10.6px;height:10.4px;background:#fff;"></div>
<span class="t" style="left:1067.2px;top:473.99px;font-size:9.82px;line-height:9.82px;color:#000;letter-spacing:0.000px;font-weight:700;-webkit-text-stroke:0.22px;">:Replacement</span>
<div class="sunk" style="left:1051.8px;top:485.8px;width:10.6px;height:10.4px;background:#d6d3ce;"></div>
<span class="t" style="left:1067.2px;top:486.63px;font-size:9.95px;line-height:9.95px;color:#8e8c88;letter-spacing:0.000px;text-shadow:0.7px 0.7px 0 #fff;font-weight:700;-webkit-text-stroke:0.22px;">Treatment Update</span>
<span class="t" style="left:858.8px;top:490.3px;font-size:9.2px;line-height:9.2px;color:#000;letter-spacing:-0.190px;">Mechanic ID:</span>
<span class="t" style="left:919.66px;top:489.95px;font-size:10.5px;line-height:10.5px;color:#e8102a;-webkit-text-stroke:0;font-weight:700;">*</span>
<div class="sunk" style="left:843.2px;top:503.6px;width:83px;height:17px;background:#fff;"></div>
<div class="btn" style="left:912.3px;top:504.8px;width:13px;height:14.9px;background:#d6d3ce;"></div>
<svg style="left:914.8px;top:509.4px" width="8" height="6" viewBox="0 0 8 6"><path d="M1 1.35H7L4 4.65Z" fill="#000"/></svg>
<span class="t" style="left:845.5px;top:507.2px;font-size:9.4px;line-height:9.4px;color:#000;letter-spacing:0.006px;font-weight:700;-webkit-text-stroke:0.22px;">AGA</span>
<div class="sunk" style="left:933.6px;top:502.6px;width:237.2px;height:20.4px;background:#e7e3e5;border-width:1.5px;border-color:#3a3a3a #5c5c5c #5c5c5c #3a3a3a;box-shadow:none;"></div>
<span class="t" style="left:935.6px;top:505.7px;font-size:9.4px;line-height:9.4px;color:#06065c;letter-spacing:-0.218px;font-weight:700;-webkit-text-stroke:0.22px;">AGAFONOV MARK</span>
<span class="t" style="left:850.4px;top:524.9px;font-size:9.2px;line-height:9.2px;color:#000;letter-spacing:-0.056px;">Action Note:</span>
<div class="fld" style="left:843.2px;top:535px;width:251px;height:66px;background:#fff;"></div>
<div style="left:1094.2px;top:535.6px;width:13.6px;height:65px;background:#e9e7e3;background-image:repeating-conic-gradient(#f6f5f3 0 25%,#dedcd8 0 50%);background-size:2px 2px;"></div>
<div class="btn" style="left:1094.2px;top:535.6px;width:13.6px;height:12.2px;background:#d6d3ce;"></div>
<div class="btn" style="left:1094.2px;top:588.4px;width:13.6px;height:12.2px;background:#d6d3ce;"></div>
<svg style="left:1097.8px;top:539.5px" width="6.4" height="4.4" viewBox="0 0 6.4 4.4"><path d="M1 3.41H5.4L3.2 0.99Z" fill="#8a8884"/></svg>
<svg style="left:1097.8px;top:592.3px" width="6.4" height="4.4" viewBox="0 0 6.4 4.4"><path d="M1 0.99H5.4L3.2 3.41Z" fill="#8a8884"/></svg>
<div class="btn" style="left:1114.4px;top:525.7px;width:56.2px;height:36.5px;background:#d6d3ce;"></div>
<span class="t" style="left:1117.9px;top:548.9px;font-size:9.2px;line-height:9.2px;color:#000;letter-spacing:-0.044px;">Defer Comp</span>
<svg style="left:1133.6px;top:527.4px" width="17.5" height="19.5" viewBox="0 0 17.5 19.5"><defs><linearGradient id="dg" x1="0" y1="0" x2="1" y2="1"><stop offset="0" stop-color="#79b0ff"/><stop offset="1" stop-color="#1c3cc0"/></linearGradient></defs><path d="M10 18.2C13.2 14.6 16 11 15.4 7.2C14.8 3.2 10.6 2.2 7.2 5.8" fill="none" stroke="#1b2f9e" stroke-width="3.9" stroke-linecap="round"/><path d="M10 18.2C13.2 14.6 16 11 15.4 7.2C14.8 3.2 10.6 2.2 7.2 5.8" fill="none" stroke="url(#dg)" stroke-width="2.6" stroke-linecap="round"/><path d="M0.8 6L8.8 3L7.8 11Z" fill="#3f7af0" stroke="#1b2f9e" stroke-width="0.8"/></svg>
<div class="btn" style="left:1114.4px;top:564px;width:56.2px;height:37.9px;background:#d6d3ce;"></div>
<span class="t" style="left:1125px;top:588.3px;font-size:9.2px;line-height:9.2px;color:#000;letter-spacing:0.047px;">Add WO</span>
<svg style="left:1130.8px;top:566.8px" width="21.5" height="19" viewBox="0 0 21.5 19"><defs><linearGradient id="fg" x1="0" y1="0" x2="0" y2="1"><stop offset="0" stop-color="#a8d4f6"/><stop offset="1" stop-color="#2f7fd0"/></linearGradient></defs><path d="M2 2.4h6.4l1.6 2h9.4v3H2z" fill="#e8f1fb" stroke="#6f9fd0" stroke-width="0.8"/><path d="M0.8 6.4h19.8v11.6H0.8z" fill="url(#fg)" stroke="#2a62a8" stroke-width="0.8"/><path d="M14.6 9.6v8.4M10.4 13.8h8.4" stroke="#fff" stroke-width="2.6"/></svg>
<div style="left:1px;top:606px;width:1174px;height:21px;background:#d6d3ce;"></div>
<div style="left:836px;top:604.8px;width:339px;height:1px;background:#73737c;"></div>
<div style="left:836px;top:605.8px;width:339px;height:0.8px;background:#f4f3f1;"></div>
<div style="left:421px;top:268.7px;width:347.6px;height:125.1px;background:#d6d3ce;border:1px solid;border-color:#d6d3ce #404040 #404040 #d6d3ce;box-shadow:inset 1px 1px 0 #fff, inset -1px -1px 0 #808080;"></div>
<div style="left:423.8px;top:271px;width:342.6px;height:14.8px;background:#0a256b;"></div>
<span class="t" style="left:425.6px;top:273.79px;font-size:9.82px;line-height:9.82px;color:#fff;letter-spacing:-0.000px;font-weight:700;-webkit-text-stroke:0.22px;">Close Component's WO</span>
<div class="btn" style="left:751.2px;top:273px;width:13.8px;height:11.2px;background:#d6d3ce;"></div>
<svg style="left:754.4px;top:275.2px" width="8" height="7" viewBox="0 0 8 7"><path d="M0.8 0.6L7 6.4M7 0.6L0.8 6.4" stroke="#8a8884" stroke-width="1.3"/></svg>
<div style="left:423.8px;top:285.8px;width:342.6px;height:69.2px;background:#fff;"></div>
<svg style="left:441.4px;top:306.9px" width="29" height="29" viewBox="0 0 29 29"><defs><radialGradient id="qg" cx="0.4" cy="0.3" r="0.8"><stop offset="0" stop-color="#5d84dd"/><stop offset="0.6" stop-color="#2549a8"/><stop offset="1" stop-color="#142e7c"/></radialGradient></defs><circle cx="14.5" cy="14.5" r="13.5" fill="#dfe2ec" stroke="#8d93a8" stroke-width="0.8"/><circle cx="14.5" cy="14.5" r="12.4" fill="url(#qg)"/><text x="14.5" y="21" text-anchor="middle" font-family="Liberation Sans, Arial, sans-serif" font-weight="700" font-size="18.5" fill="#fff">?</text></svg>
<span class="t" style="left:477.6px;top:317.35px;font-size:9.5px;line-height:9.5px;color:#000;letter-spacing:-0.178px;">Confirm Close Selected Component's WO - Replacement Done !</span>
<div class="btn" style="left:623.8px;top:364.2px;width:64.7px;height:19.2px;background:#d6d3ce;"></div>
<span class="t" style="left:648.9px;top:369.1px;font-size:9.2px;line-height:9.2px;color:#1c1c1c;letter-spacing:-0.254px;">Yes</span>
<div style="left:695px;top:364.2px;width:64.7px;height:19.2px;background:#1d1d1d;"></div>
<div class="btn" style="left:696px;top:365.2px;width:62.7px;height:17.2px;background:#d6d3ce;"></div>
<span class="t" style="left:721.47px;top:369.1px;font-size:9.2px;line-height:9.2px;color:#000;">No</span>
<svg style="left:640px;top:350px" width="160" height="160" viewBox="640 350 160 160"><path d="M660.3 367L770.5 472.8L744.9 494.2Z" fill="#1499ff"/><circle cx="758.9" cy="484.9" r="17.9" fill="none" stroke="#f2f2f2" stroke-width="0.9"/><circle cx="758.9" cy="484.9" r="16.9" fill="#1499ff" stroke="#2b2b2b" stroke-width="1.1"/><text x="758.8" y="489" text-anchor="middle" font-family="DejaVu Sans, Liberation Sans, sans-serif" font-weight="700" font-size="11.3" fill="#fff">47</text></svg>
<div style="left:1174.8px;top:0px;width:1.2px;height:633px;background:#fff;"></div>
<div style="left:0px;top:627px;width:1176px;height:6px;background:#fff;"></div>
</div>
</body>
</html>
